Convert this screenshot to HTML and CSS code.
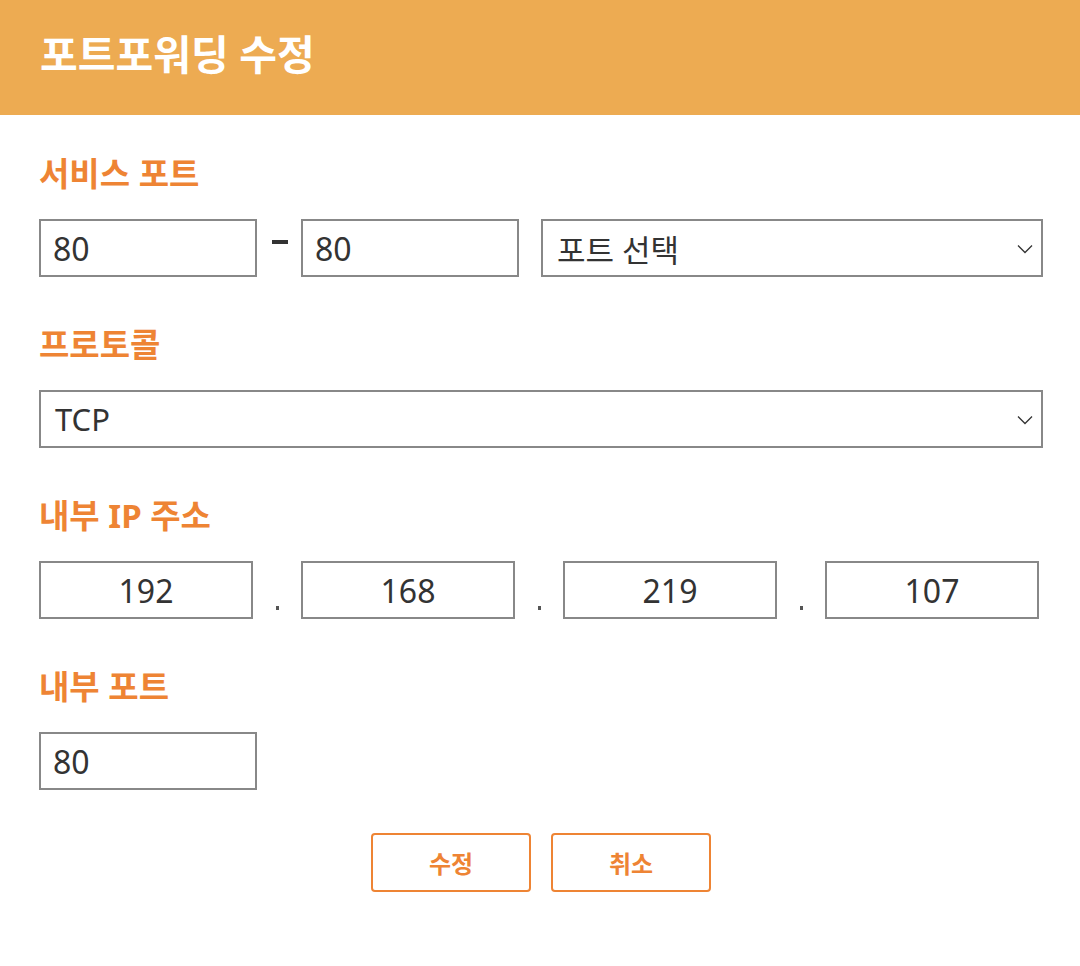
FILE: index.html
```html
<!DOCTYPE html>
<html lang="ko">
<head>
<meta charset="UTF-8">
<meta name="viewport" content="width=device-width, initial-scale=1.0">
<title>포트포워딩 수정</title>
<link rel="stylesheet" href="styles.css">
</head>
<body>
<div class="header">
    <h1>포트포워딩 수정</h1>
</div>
<div class="content">
    <div class="field">
        <label class="field-title">서비스 포트</label>
        <div class="row">
            <input type="text" class="box box-short" value="80">
            <span class="dash"></span>
            <input type="text" class="box box-short" value="80">
            <div class="select select-side">
                <span>포트 선택</span>
                <svg class="chevron" width="16" height="10" viewBox="0 0 16 10"><path d="M1 1.5 L8 8.5 L15 1.5" fill="none" stroke="#333" stroke-width="1.3"/></svg>
            </div>
        </div>
    </div>

    <div class="field">
        <label class="field-title">프로토콜</label>
        <div class="select">
            <span>TCP</span>
            <svg class="chevron" width="16" height="10" viewBox="0 0 16 10"><path d="M1 1.5 L8 8.5 L15 1.5" fill="none" stroke="#333" stroke-width="1.3"/></svg>
        </div>
    </div>

    <div class="field">
        <label class="field-title">내부 IP 주소</label>
        <div class="row ip-row">
            <input type="text" class="box box-ip" value="192">
            <span class="dot"></span>
            <input type="text" class="box box-ip" value="168">
            <span class="dot"></span>
            <input type="text" class="box box-ip" value="219">
            <span class="dot"></span>
            <input type="text" class="box box-ip" value="107">
        </div>
    </div>

    <div class="field">
        <label class="field-title">내부 포트</label>
        <div class="row">
            <input type="text" class="box box-short" value="80">
        </div>
    </div>

    <div class="buttons">
        <button class="btn">수정</button>
        <button class="btn">취소</button>
    </div>
</div>
</body>
</html>
```

FILE: styles.css
```css
body {
    font-family: "Noto Sans", "Noto Sans CJK KR", sans-serif;
    margin: 0;
    padding: 0;
    background-color: #fff;
    color: #333;
}

.header {
    height: 115px;
    background-color: #edab52;
    padding: 0 40px;
    display: flex;
    align-items: center;
}

.header h1 {
    margin: 0;
    color: #fff;
    font-size: 41px;
    font-weight: bold;
    line-height: 1;
    padding-bottom: 6px;
}

.content {
    padding: 37px 37px 0 39px;
}

.field {
    margin-bottom: 46px;
}

.field-title {
    display: block;
    color: #ee8434;
    font-size: 33px;
    font-weight: bold;
    line-height: 44px;
    margin-bottom: 23px;
}

.row {
    display: flex;
    align-items: center;
}

.box {
    box-sizing: border-box;
    height: 58px;
    border: 2px solid #888;
    border-radius: 0;
    padding: 0 12px;
    font-family: "Noto Sans", "Noto Sans CJK KR", sans-serif;
    font-size: 32px;
    color: #333;
    outline: none;
    margin: 0;
}

.box-short {
    width: 218px;
}

.dash {
    width: 44px;
    align-self: stretch;
    position: relative;
}

.dash::after {
    content: "";
    position: absolute;
    left: 15px;
    top: 21px;
    width: 16px;
    height: 4px;
    background-color: #333;
}

.select {
    box-sizing: border-box;
    height: 58px;
    border: 2px solid #888;
    padding: 0 8px 0 14px;
    display: flex;
    align-items: center;
    justify-content: space-between;
    font-size: 31px;
    color: #333;
}

.select-side {
    flex: 1;
    margin-left: 22px;
}

.chevron {
    margin-top: 2px;
}

.ip-row {
    width: 1000px;
}

.box-ip {
    width: 214px;
    text-align: center;
}

.dot {
    width: 48px;
    align-self: stretch;
    position: relative;
}

.dot::after {
    content: "";
    position: absolute;
    left: 23px;
    bottom: 9px;
    width: 3px;
    height: 4px;
    background-color: #555;
}

.buttons {
    display: flex;
    justify-content: center;
    gap: 20px;
    margin-top: -3px;
}

.btn {
    width: 160px;
    height: 59px;
    background-color: #fff;
    border: 2px solid #ee8434;
    border-radius: 4px;
    color: #ee8434;
    font-family: "Noto Sans", "Noto Sans CJK KR", sans-serif;
    font-size: 24px;
    font-weight: bold;
    cursor: pointer;
}
```
